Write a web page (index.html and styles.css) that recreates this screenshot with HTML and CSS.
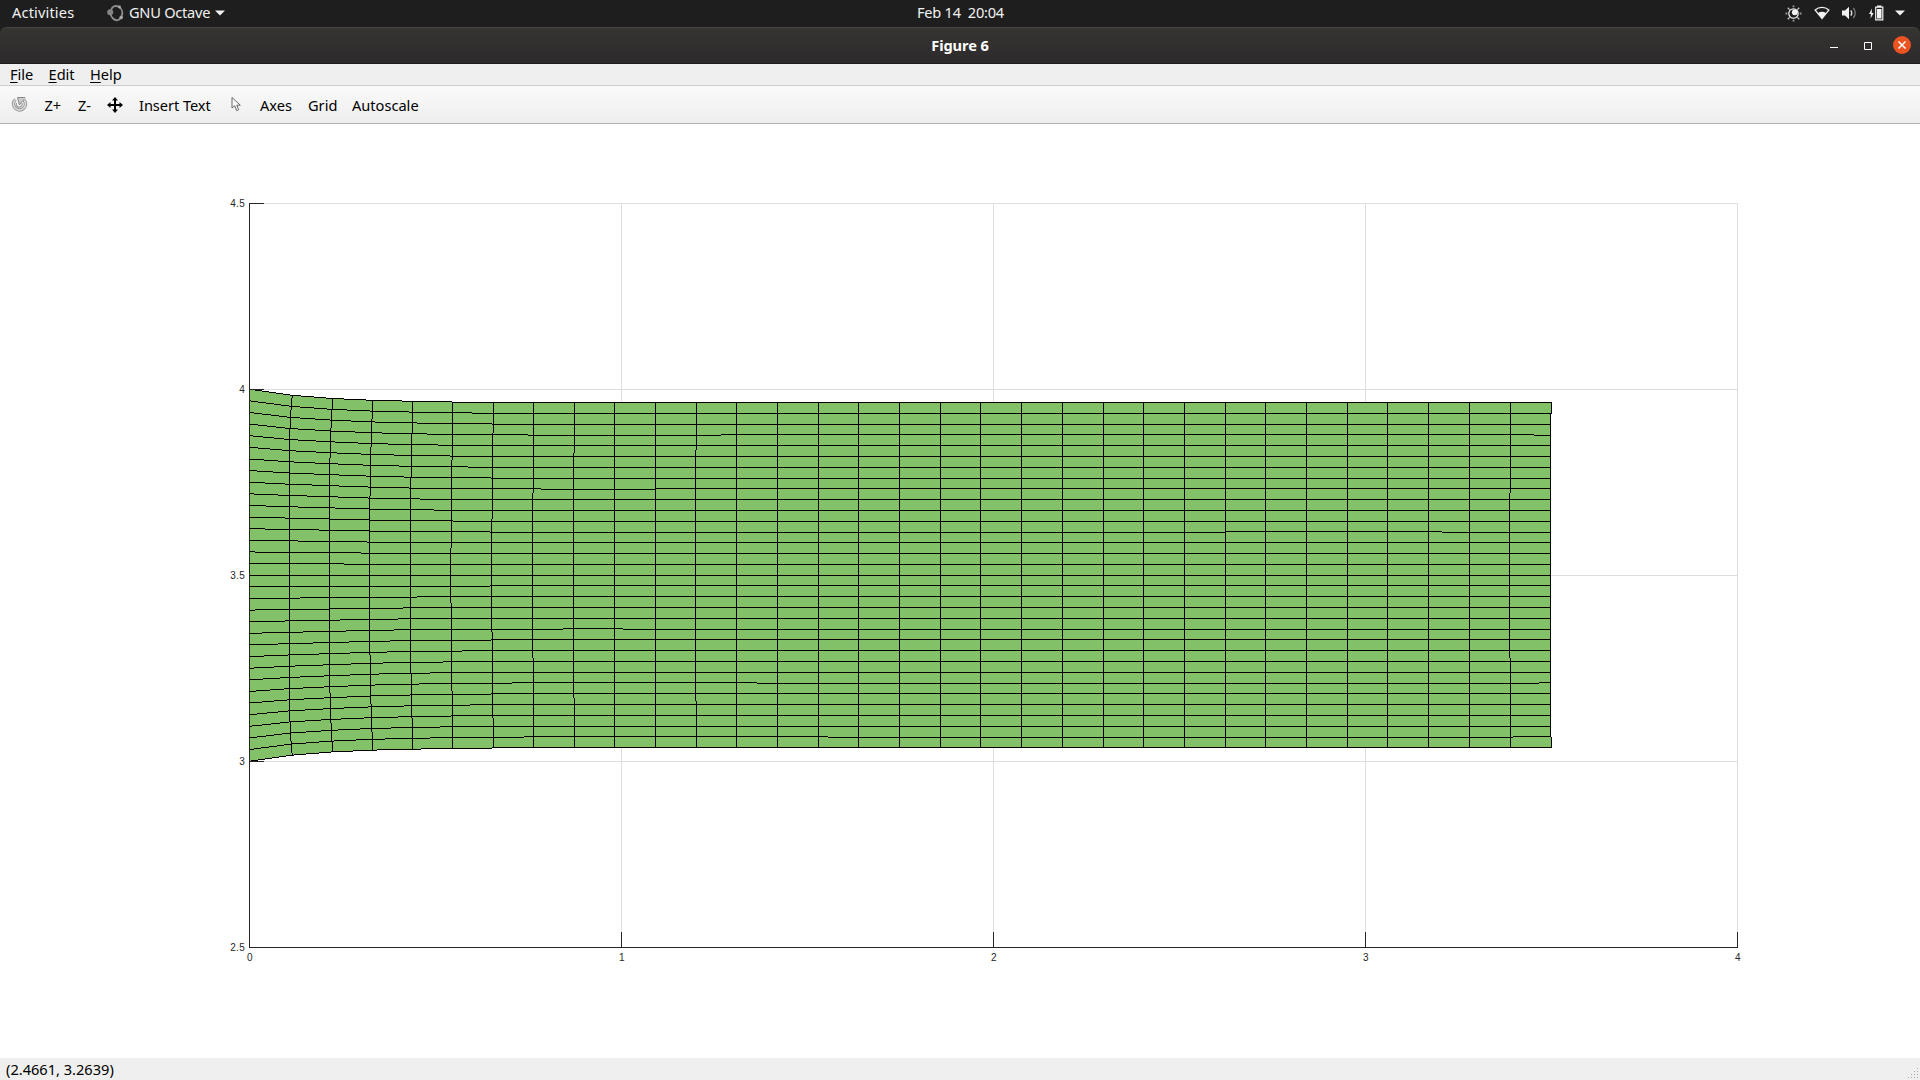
FILE: index.html
```
<!DOCTYPE html>
<html lang="en">
<head>
<meta charset="utf-8">
<title>Figure 6</title>
<link rel="stylesheet" href="styles.css">
</head>
<body>
<header class="topbar">
  <span class="activities">Activities</span>
  <span class="app">
    <svg class="app-icon" width="17" height="18" viewBox="0 0 17 18"><path d="M4 6C5.500 2 9 .9 12 3c3.500 2 4 6 2.500 9.500C13 16.500 9 17.500 6 14.500 4.500 13 3.500 11 3.500 9" fill="none" stroke="#8a8a8a" stroke-width="1.900"/><circle cx="3.200" cy="8.200" r="3" fill="#858585"/><circle cx="12.500" cy="3" r="1.400" fill="#aaa"/><circle cx="14.200" cy="13.500" r="1.800" fill="#aaa"/></svg>
    <span class="app-name">GNU Octave</span>
    <svg width="10" height="6" viewBox="0 0 10 6"><path d="M0 .5h10L5 5.500z" fill="#f2f2f2"/></svg>
  </span>
  <span class="clock">Feb 14&nbsp; 20:04</span>
  <span class="tray">
    <svg width="17" height="17" viewBox="0 0 17 17"><circle cx="8.500" cy="8.500" r="4.700" fill="none" stroke="#f2f2f2" stroke-width="1.200"/><circle cx="9.800" cy="7.300" r="2.900" fill="#f2f2f2"/><path d="M7.600.5h1.800v1.800H7.600zM7.600 14.700h1.800v1.800H7.600zM.5 7.600h1.800v1.800H.5zM14.700 7.600h1.800v1.800h-1.800z" fill="#999"/><path d="M2.800 2.800l1.800 1.800M14.200 2.800l-1.800 1.800M2.800 14.200l1.800-1.800M14.200 14.200l-1.800-1.800" stroke="#ccc" stroke-width="1.300"/></svg>
    <svg width="16" height="14" viewBox="0 0 16 14"><path d="M1.100 4C5 .5 11 .5 14.900 4L8 12.500z" fill="none" stroke="#f2f2f2" stroke-width="1.200"/><path d="M3.800 7.200Q8 4.500 12.200 7.200L8 12.800z" fill="#f2f2f2"/></svg>
    <svg width="15" height="14" viewBox="0 0 15 14"><path d="M0 4.500h3L7 .7v12.600L3 9.500H0z" fill="#f2f2f2"/><path d="M8.800 4.300q2 2.700 0 5.400" fill="none" stroke="#ddd" stroke-width="1.300"/><path d="M11.300 2q4 5 0 10" fill="none" stroke="#777" stroke-width="1.300"/></svg>
    <svg width="15" height="16" viewBox="0 0 15 16"><path d="M3 3.500L0 9h2l-.5 4.500L4.700 8h-2z" fill="#f2f2f2"/><path d="M6.700 2.200h7.100v12.600H6.700z" fill="none" stroke="#f2f2f2" stroke-width="1.200"/><path d="M8 .5h4.500v1.500H8zM8 4h4.500v9.500H8z" fill="#f2f2f2"/></svg>
    <svg class="tray-arrow" width="10" height="6" viewBox="0 0 10 6"><path d="M0 .5h10L5 5.500z" fill="#f2f2f2"/></svg>
  </span>
</header>

<div class="window">
  <div class="titlebar">
    <span class="title">Figure 6</span>
    <span class="controls">
      <svg width="8" height="9" viewBox="0 0 8 9"><path d="M0 6h8v1H0z" fill="#fff"/></svg>
      <svg width="8" height="8" viewBox="0 0 8 8"><path d="M.5.5h7v7h-7z" fill="none" stroke="#fff"/></svg>
      <svg width="19" height="19" viewBox="0 0 19 19"><circle cx="9" cy="9" r="9" fill="#e95420"/><path d="M5.500 5.500l7 7M12.500 5.500l-7 7" stroke="#fff" stroke-width="1.500"/></svg>
    </span>
  </div>

  <nav class="menubar">
    <span class="menu-file"><u>F</u>ile</span>
    <span class="menu-edit"><u>E</u>dit</span>
    <span class="menu-help"><u>H</u>elp</span>
  </nav>

  <div class="toolbar">
    <svg class="tool-rotate" width="17" height="18" viewBox="0 0 17 18"><path d="M4.500 3.500A6 6 0 1 0 13 4" fill="none" stroke="#999" stroke-width="3.400"/><path d="M4.500 3.500A6 6 0 1 0 13 4" fill="none" stroke="#ddd" stroke-width="1.400"/><path d="M6.500 1.500h7.500M6.500 1.500l2 7.500 2-3 3.500-3.500" fill="#ccc" stroke="#888"/><path d="M5.500 7a3 3 0 1 0 5.500 0" fill="none" stroke="#999" stroke-width="1.200"/></svg>
    <span class="tool-zin">Z+</span>
    <span class="tool-zout">Z-</span>
    <svg class="tool-pan" width="16" height="16" viewBox="0 0 16 16"><path d="M7 2h2v12H7zM2 7h12v2H2z"/><path d="M8 0l3 3.500H5zM8 16l3-3.500H5zM0 8l3.500-3v6zM16 8l-3.500-3v6z"/></svg>
    <span class="tool-text">Insert Text</span>
    <svg class="tool-select" width="11" height="17" viewBox="0 0 11 17"><path d="M1 1.500v10.500l2.700-2.300 2 5 2-1-1.900-4.500h3.500z" fill="#fafafa" stroke="#666"/></svg>
    <span class="tool-axes">Axes</span>
    <span class="tool-grid">Grid</span>
    <span class="tool-auto">Autoscale</span>
  </div>

  <main class="figure">
    <svg width="1920" height="934" viewBox="0 124 1920 934" shape-rendering="crispEdges">
      <path class="grid" d="M249 203h1489v1H249zM249 389h1489v1H249zM249 575h1489v1H249zM249 761h1489v1H249zM621 203h1v744h-1zM993 203h1v744h-1zM1365 203h1v744h-1zM1737 203h1v744h-1z"/>
      <path id="cells" class="cells"/>
      <path id="edges" class="edges"/>
      <path class="axis" d="M249 203h1v745h-1zM249 947h1489v1H249zM249 203h15v1h-15zM249 389h15v1h-15zM249 761h15v1h-15zM621 932h1v16h-1zM993 932h1v16h-1zM1365 932h1v16h-1zM1737 932h1v16h-1z"/>
      <g class="ticks ticks-y">
        <text x="245" y="207">4.5</text><text x="245" y="393">4</text><text x="245" y="579">3.5</text><text x="245" y="765">3</text><text x="245" y="951">2.5</text>
      </g>
      <g class="ticks ticks-x">
        <text x="250" y="961">0</text><text x="622" y="961">1</text><text x="994" y="961">2</text><text x="1366" y="961">3</text><text x="1738" y="961">4</text>
      </g>
    </svg>
  </main>

  <footer class="statusbar">
    <span class="coords">(2.4661, 3.2639)</span>
    <svg width="11" height="11" viewBox="0 0 11 11" shape-rendering="crispEdges"><path d="M9 0h1v1H9zM6 3h1v1H6zM9 3h1v1H9zM3 6h1v1H3zM6 6h1v1H6zM9 6h1v1H9zM0 9h1v1H0zM3 9h1v1H3zM6 9h1v1H6zM9 9h1v1H9z" fill="#aaa"/></svg>
  </footer>
</div>
<script src="mesh.js"></script>
</body>
</html>
```
FILE: styles.css
```
* { box-sizing: border-box; }
body { margin: 0; width: 1920px; height: 1080px; overflow: hidden; background: #1e1e1e; color: #000; font: 14.6px/20px "Noto Sans", "Open Sans", sans-serif; display: flex; flex-direction: column; }
svg { display: block; flex: none; }
span { white-space: nowrap; }

.topbar { height: 27px; flex: none; display: grid; grid-template-columns: 95px 810px 88px 1fr; align-items: center; padding: 0 15px 1px 12px; background: #1e1e1e; color: #f2f2f2; }
.activities, .app-name, .clock { padding-bottom: 2px; }
.activities { letter-spacing: .15px; }
.app { display: flex; align-items: center; gap: 6px; }
.app-icon { margin-right: -1px; }
.app-name { width: 81px; margin-right: -1px; letter-spacing: -.25px; }
.clock { letter-spacing: -.25px; }
.tray { display: flex; align-items: center; justify-content: flex-end; gap: 12px; }
.tray-arrow { margin-left: -1px; }

.window { flex: 1; display: flex; flex-direction: column; }
.titlebar { height: 37px; flex: none; display: grid; grid-template-columns: 1fr 120px 1fr; align-items: center; border-top: 1px solid #474642; border-bottom: 1px solid #1f1c1e; border-radius: 7px 7px 0 0; background: linear-gradient(#353431, #2d2a2c); color: #fff; }
.title { grid-column: 2; padding-bottom: 2px; text-align: center; font-weight: 700; letter-spacing: -.1px; }
.controls { display: flex; align-items: center; justify-content: flex-end; gap: 21px; padding-right: 8px; height: 34px; }
.controls svg:nth-child(1) { margin-right: 5px; }

.menubar { height: 22px; flex: none; display: flex; align-items: center; padding: 0 0 2px 10px; background: #efefef; border-bottom: 1px solid #cdcdcd; }
.menubar u { text-underline-offset: 2px; text-decoration-thickness: 1px; text-decoration-skip-ink: none; }
.menu-file { width: 38.5px; }
.menu-edit { width: 41.5px; }

.toolbar { height: 38px; flex: none; display: flex; align-items: center; padding-left: 11px; background: linear-gradient(#fafafa, #eee); border-bottom: 1px solid #b4b4b4; }
.toolbar span { padding-top: 1px; }
.tool-rotate { margin-right: 16.5px; }
.tool-zin { width: 33.5px; }
.tool-zout { width: 29px; }
.tool-pan { margin-right: 16px; }
.tool-text { width: 92px; letter-spacing: -.05px; }
.tool-select { margin-right: 18px; }
.tool-axes { width: 48px; }
.tool-grid { width: 44px; }

.figure { height: 934px; flex: none; background: #fff; }
.grid { fill: #dedede; }
.axis { fill: #262626; }
.cells { fill: #82c167; }
.edges { fill: #000; }
.ticks { font: 10px "Liberation Sans", Arial, sans-serif; fill: #262626; letter-spacing: .3px; }
.ticks-y { text-anchor: end; }
.ticks-x { text-anchor: middle; }

.statusbar { height: 22px; flex: none; display: flex; align-items: center; justify-content: space-between; padding: 0 1px 0 6px; background: #efefef; }
.coords { padding-bottom: 1px; }
.statusbar svg { margin-top: 8px; }
```
FILE: mesh.js
```
// Deformed mesh: 32 x 32 cells, clamped on the left edge.
const CENTER = 575;
// Column pixel position and the distances from the centre line where it moves one pixel right.
const columns = [
  [249], [289, 147, 166, 178], [329, 118, 148, 166], [369, 80, 129, 157], [410, 99, 143],
  [450, 28, 116], [491, 57, 143], [532, 83], [573, 123], [614], [655], [695, 126], [736], [777],
  [818], [858], [899], [940], [980], [1021], [1062], [1103], [1143], [1184], [1225], [1265],
  [1306], [1347], [1387], [1428], [1469], [1509, 83], [1550, 162]
];
// Half height of each column, then the bulge of its inner nodes.
const half = [186, 179.9, 176.7, 174.9, 173.95, 173.2, 172.78, 172.6];
const bulge = [0, 1.05, 1.2, 0.65, 0.2, 0.1, 0, 0];
// Row segments that sit one pixel off: row -> [from, to, offset].
const offsets = {
  3: [[528, 721, 1], [1534, 1552, 1]],
  8: [[541, 655, 1]],
  12: [[1225, 1442, -1]],
  21: [[563, 623, -1]],
  26: [[512, 757, -1], [1539, 1552, -1]],
  31: [[524, 828, -1], [1513, 1552, -1]]
};
const columnX = (i, dist) => columns[i][0] + columns[i].slice(1).filter(d => dist >= d).length;

function rowY(j, x) {
  const t = (j - 16) / 16;
  let dist = t * 172.6;
  if (x < 528) {
    for (let i = 0; i < 7; i++) {
      const a = columnX(i, Math.abs(t) * half[i]);
      const b = columnX(i + 1, Math.abs(t) * half[i + 1]);
      if (x >= a && x < b) {
        const f = (x - a) / (b - a);
        const at = k => t * half[k] + bulge[k] * Math.sin(Math.PI * t);
        dist = at(i) * (1 - f) + at(i + 1) * f;
      }
    }
  }
  let y = Math.floor(575.2 + dist);
  for (const [from, to, off] of offsets[j] || []) {
    if (x >= from && x < to) y = Math.floor(575.2 + t * 172.6) + off;
  }
  return y;
}

let edges = "";
let cells = "";
for (let j = 0; j <= 32; j++) {
  const end = j === 0 || j === 32 ? 1551 : 1550;
  let start = 249;
  for (let x = 250; x <= end + 1; x++) {
    if (x > end || rowY(j, x) !== rowY(j, start)) {
      edges += `M${start} ${rowY(j, start)}H${x}v1H${start}z`;
      start = x;
    }
  }
}
for (let x = 249; x <= 1550; x++) {
  cells += `M${x} ${rowY(0, x)}h1V${rowY(32, x) + 1}h-1z`;
}
columns.forEach((c, i) => {
  const px = columnX(i, 999);
  const top = rowY(0, px);
  const bottom = rowY(32, px) + 1;
  let start = top;
  for (let y = top + 1; y <= bottom; y++) {
    const x0 = columnX(i, Math.abs(start - CENTER));
    if (y === bottom || columnX(i, Math.abs(y - CENTER)) !== x0) {
      edges += `M${x0} ${start}h1V${y}h-1z`;
      start = y;
    }
  }
});
document.getElementById("cells").setAttribute("d", cells);
document.getElementById("edges").setAttribute("d", edges);
```
